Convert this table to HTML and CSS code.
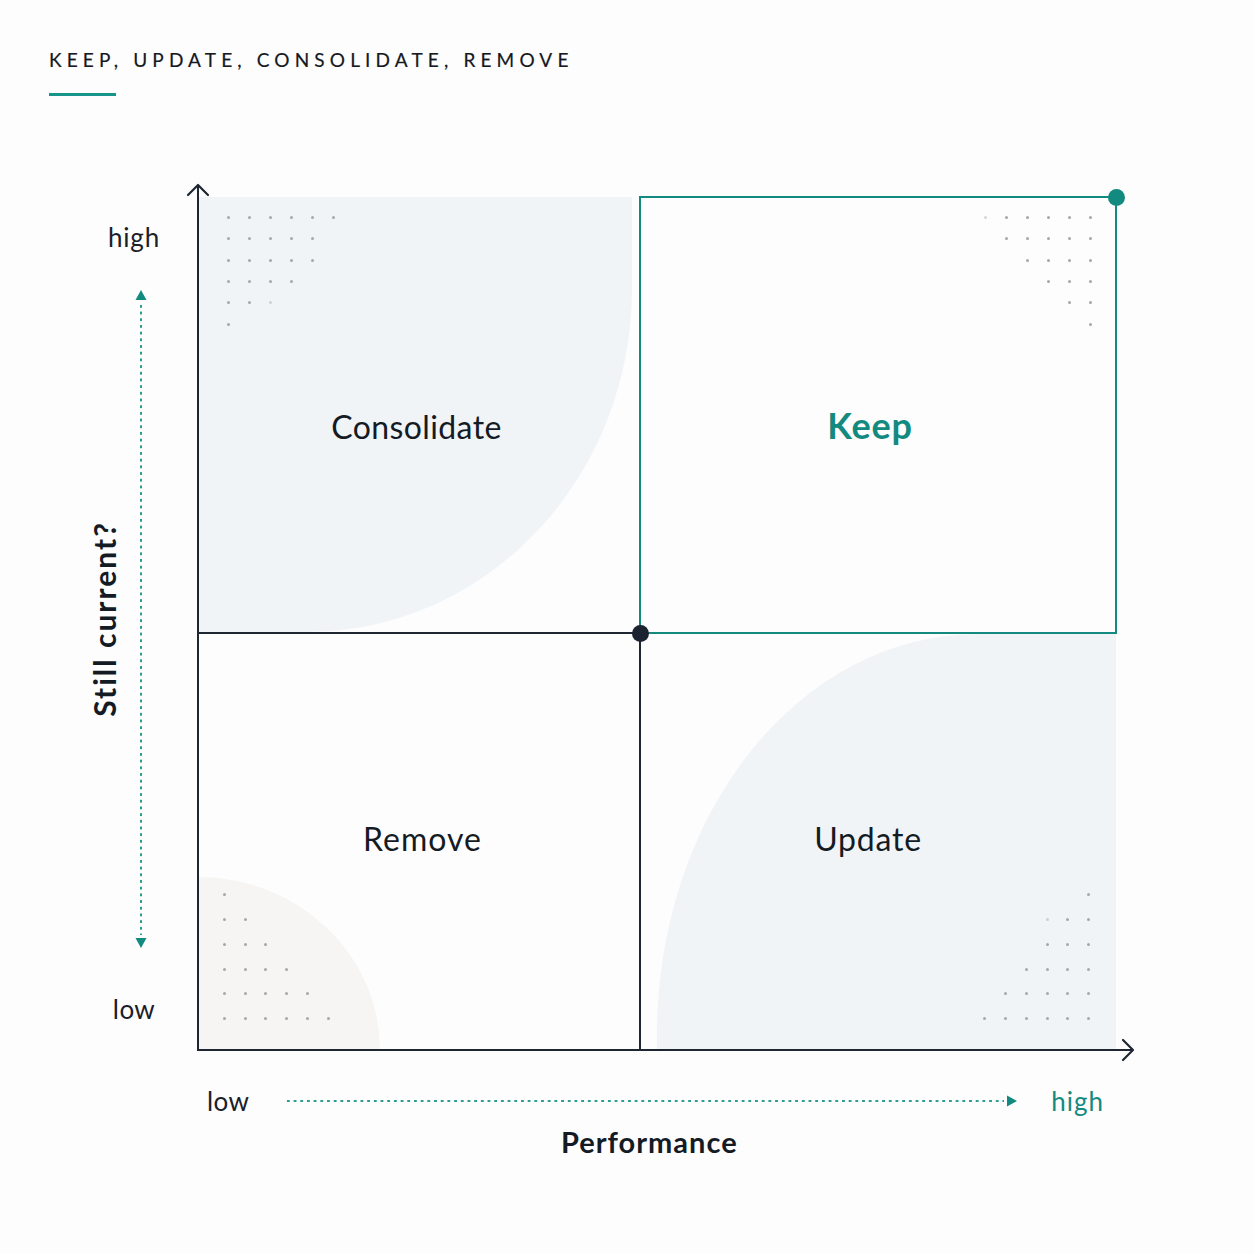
FILE: index.html
```html
<!DOCTYPE html>
<html lang="en">
<head>
<meta charset="utf-8">
<title>Keep, Update, Consolidate, Remove</title>
<link rel="stylesheet" href="styles.css">
</head>
<body>
<main class="page">
  <header class="heading">
    <h1 class="title">KEEP, UPDATE, CONSOLIDATE, REMOVE</h1>
    <div class="rule"></div>
  </header>

  <section class="figure">
    <div class="yaxis">
      <div class="ytitle"><span>Still current?</span></div>
      <div class="yscale">
        <span class="scale-label yhigh">high</span>
        <div class="vdots">
          <svg class="tri" width="12" height="10" viewBox="0 0 12 10"><polygon points="6,0 11.5,10 0.5,10"/></svg>
          <div class="vline"></div>
          <svg class="tri" width="12" height="10" viewBox="0 0 12 10"><polygon points="0.5,0 11.5,0 6,10"/></svg>
        </div>
        <span class="scale-label ylow">low</span>
      </div>
    </div>

    <div class="chart">
      <div class="plot">
        <div class="quad q-consolidate">
          <div class="shape shape-consolidate"></div>
          <div class="dotgrid dg-tl">
            <i class="d"></i><i class="d"></i><i class="d"></i><i class="d"></i><i class="d"></i><i class="d"></i>
            <i class="d"></i><i class="d"></i><i class="d"></i><i class="d"></i><i class="d"></i><i></i>
            <i class="d"></i><i class="d"></i><i class="d"></i><i class="d"></i><i class="d"></i><i></i>
            <i class="d"></i><i class="d"></i><i class="d"></i><i class="d"></i><i></i><i></i>
            <i class="d"></i><i class="d"></i><i class="d f"></i><i></i><i></i><i></i>
            <i class="d"></i><i></i><i></i><i></i><i></i><i></i>
          </div>
          <span class="qlabel consolidate">Consolidate</span>
        </div>

        <div class="quad q-keep">
          <div class="dotgrid dg-tr">
            <i class="d f"></i><i class="d"></i><i class="d"></i><i class="d"></i><i class="d"></i><i class="d"></i>
            <i></i><i class="d"></i><i class="d"></i><i class="d"></i><i class="d"></i><i class="d"></i>
            <i></i><i></i><i class="d"></i><i class="d"></i><i class="d"></i><i class="d"></i>
            <i></i><i></i><i></i><i class="d"></i><i class="d"></i><i class="d"></i>
            <i></i><i></i><i></i><i></i><i class="d"></i><i class="d"></i>
            <i></i><i></i><i></i><i></i><i></i><i class="d"></i>
          </div>
          <span class="qlabel keep">Keep</span>
        </div>

        <div class="quad q-remove">
          <div class="shape shape-remove"></div>
          <div class="dotgrid dg-bl">
            <i class="d"></i><i></i><i></i><i></i><i></i><i></i>
            <i class="d"></i><i class="d"></i><i></i><i></i><i></i><i></i>
            <i class="d"></i><i class="d"></i><i class="d"></i><i></i><i></i><i></i>
            <i class="d"></i><i class="d"></i><i class="d"></i><i class="d"></i><i></i><i></i>
            <i class="d"></i><i class="d"></i><i class="d"></i><i class="d"></i><i class="d"></i><i></i>
            <i class="d"></i><i class="d"></i><i class="d"></i><i class="d"></i><i class="d"></i><i class="d"></i>
          </div>
          <span class="qlabel remove">Remove</span>
        </div>

        <div class="quad q-update">
          <div class="shape shape-update"></div>
          <div class="dotgrid dg-br">
            <i></i><i></i><i></i><i></i><i></i><i class="d"></i>
            <i></i><i></i><i></i><i class="d f"></i><i class="d"></i><i class="d"></i>
            <i></i><i></i><i></i><i class="d"></i><i class="d"></i><i class="d"></i>
            <i></i><i></i><i class="d"></i><i class="d"></i><i class="d"></i><i class="d"></i>
            <i></i><i class="d"></i><i class="d"></i><i class="d"></i><i class="d"></i><i class="d"></i>
            <i class="d"></i><i class="d"></i><i class="d"></i><i class="d"></i><i class="d"></i><i class="d"></i>
          </div>
          <span class="qlabel update">Update</span>
        </div>
      </div>

      <div class="axis axis-y"></div>
      <div class="axis axis-x"></div>
      <svg class="chev chev-y" width="24" height="16" viewBox="0 0 24 16"><polyline points="2,12 12,2 22,12"/></svg>
      <svg class="chev chev-x" width="16" height="24" viewBox="0 0 16 24"><polyline points="4,2 14,12 4,22"/></svg>
      <span class="node node-teal"></span>
      <span class="node node-dark"></span>
    </div>

    <div class="xscale">
      <span class="scale-label xlow">low</span>
      <div class="hdots">
        <div class="hline"></div>
        <svg class="tri" width="10" height="12" viewBox="0 0 10 12"><polygon points="0,0.5 10,6 0,11.5"/></svg>
      </div>
      <span class="scale-label xhigh">high</span>
    </div>

    <div class="xtitle">Performance</div>
  </section>
</main>
</body>
</html>
```

FILE: styles.css
```css
* { box-sizing: border-box; }

html, body {
  margin: 0;
  padding: 0;
  background: #fdfdfd;
}

body {
  font-family: Lato, "Noto Sans", "Liberation Sans", sans-serif;
  color: #141b24;
  width: 1254px;
  height: 1254px;
  overflow: hidden;
}

.page {
  width: 1254px;
}

/* Heading */
.heading {
  padding: 48px 0 0 49px;
}

.title {
  margin: 0;
  font-size: 19px;
  line-height: 24px;
  font-weight: 400;
  letter-spacing: 5.15px;
  color: #15191f;
  -webkit-text-stroke: 0.2px #15191f;
}

.rule {
  width: 67px;
  height: 3px;
  margin-top: 21px;
  background: #17958b;
}

/* Figure */
.figure {
  margin-top: 89px;
  display: grid;
  grid-template-columns: 198px 935px;
  grid-template-rows: 865px auto auto;
}

.yaxis {
  grid-column: 1;
  grid-row: 1;
  display: grid;
  grid-template: 1fr / 1fr;
}

.ytitle,
.yscale {
  grid-area: 1 / 1;
}

.ytitle {
  display: flex;
  align-items: center;
  padding: 3px 0 0 87px;
}

.ytitle span {
  writing-mode: vertical-rl;
  transform: rotate(180deg);
  font-size: 30px;
  line-height: 34px;
  font-weight: 700;
  letter-spacing: 2px;
  white-space: nowrap;
  color: #141b24;
}

.yscale {
  width: 60px;
  margin-left: 104px;
  display: flex;
  flex-direction: column;
  align-items: center;
}

.scale-label {
  font-size: 26px;
  line-height: 30px;
  letter-spacing: 0.4px;
  color: #1a2029;
}

.yhigh { margin-top: 37px; letter-spacing: 0.8px; }

.vdots {
  height: 658px;
  width: 12px;
  margin-top: 38px;
  margin-left: 14px;
  display: flex;
  flex-direction: column;
  align-items: center;
}

.tri { display: block; flex: none; }
.tri polygon { fill: #138a80; }

.vline {
  flex: 1;
  width: 4px;
  margin: 3px 0;
  background: radial-gradient(circle, #2c9d93 0 1.1px, transparent 1.5px) 0 0 / 4px 6.7px repeat-y;
}

.ylow { margin-top: 46px; }

/* Chart */
.chart {
  grid-column: 2;
  grid-row: 1;
  position: relative;
  padding-top: 11px;
}

.plot {
  display: grid;
  grid-template-columns: 441px 478px;
  grid-template-rows: 438px 416px;
}

.quad {
  position: relative;
  display: flex;
  align-items: center;
  justify-content: center;
}

.q-consolidate {
  border-bottom: 2px solid #1e2632;
  padding: 26px 4px 0 0;
}

.q-keep {
  border: 2px solid #138a80;
  padding: 20px 16px 0 0;
}

.q-remove {
  padding: 0 0 6px 8px;
}

.q-update {
  border-left: 2px solid #1e2632;
  padding: 0 22px 6px 0;
}

.shape { position: absolute; }

.shape-consolidate {
  left: 0;
  top: 1px;
  width: 434px;
  bottom: 0;
  background: #f1f4f7;
  border-bottom-right-radius: 325px 343px;
}

.shape-update {
  left: 16px;
  top: 0;
  right: 1px;
  bottom: 1px;
  background: #f1f4f6;
  border-top-left-radius: 320px 400px;
}

.shape-remove {
  left: 0;
  bottom: 0;
  width: 182px;
  height: 173px;
  background: #f6f5f3;
  border-top-right-radius: 182px 173px;
}

.qlabel {
  position: relative;
  font-size: 32px;
  line-height: 38px;
  font-weight: 400;
  color: #141b24;
}

.qlabel.consolidate { letter-spacing: 0.4px; }
.qlabel.remove { letter-spacing: 1px; }
.qlabel.update { letter-spacing: 0.8px; }

.qlabel.keep {
  font-size: 36px;
  font-weight: 700;
  letter-spacing: 0.8px;
  color: #138a80;
}

/* Dot grids */
.dotgrid {
  position: absolute;
  display: grid;
  grid-template-columns: repeat(6, 21px);
  grid-auto-rows: 21.3px;
}

.dg-bl, .dg-br {
  grid-template-columns: repeat(6, 20.8px);
  grid-auto-rows: 24.8px;
}

.dotgrid i {
  display: flex;
  align-items: center;
  justify-content: center;
}

.dotgrid i.d::before {
  content: "";
  width: 3px;
  height: 3px;
  border-radius: 50%;
  background: #a3a8ae;
}

.dotgrid i.f::before { opacity: 0.45; }

.dg-tl { left: 20px; top: 11px; }
.dg-tr { right: 14px; top: 9px; }
.dg-bl { left: 16px; bottom: 19px; }
.dg-br { right: 18px; bottom: 19px; }

/* Axes & overlays */
.axis {
  position: absolute;
  background: #1e2632;
}

.axis-y {
  left: -1px;
  top: 0;
  bottom: -1px;
  width: 2px;
}

.axis-x {
  left: -1px;
  right: 0;
  bottom: -1px;
  height: 2px;
}

.chev {
  position: absolute;
  overflow: visible;
}

.chev polyline {
  fill: none;
  stroke: #1e2632;
  stroke-width: 2.2;
  stroke-linecap: round;
  stroke-linejoin: round;
}

.chev-y { left: -12px; top: -2px; }
.chev-x { left: 921px; top: 853px; }

.node {
  position: absolute;
  width: 17px;
  height: 17px;
  border-radius: 50%;
}

.node-teal {
  background: #138a80;
  left: 909.5px;
  top: 3.5px;
}

.node-dark {
  background: #1b2230;
  left: 433.5px;
  top: 439.5px;
}

/* X scale */
.xscale {
  grid-column: 2;
  grid-row: 2;
  display: flex;
  align-items: center;
  margin-top: 36px;
  padding-left: 9px;
}

.hdots {
  width: 732px;
  margin-left: 36px;
  display: flex;
  align-items: center;
}

.hline {
  flex: 1;
  height: 4px;
  margin-right: 3px;
  background: radial-gradient(circle, #2c9d93 0 1.1px, transparent 1.5px) 0 0 / 6.7px 4px repeat-x;
}

.xhigh {
  margin-left: 34px;
  letter-spacing: 1px;
  color: #138a80;
}

.xtitle {
  grid-column: 2;
  grid-row: 3;
  margin-top: 10px;
  padding-left: 363px;
  font-size: 29px;
  line-height: 32px;
  font-weight: 700;
  letter-spacing: 1px;
  color: #141b24;
}
```
